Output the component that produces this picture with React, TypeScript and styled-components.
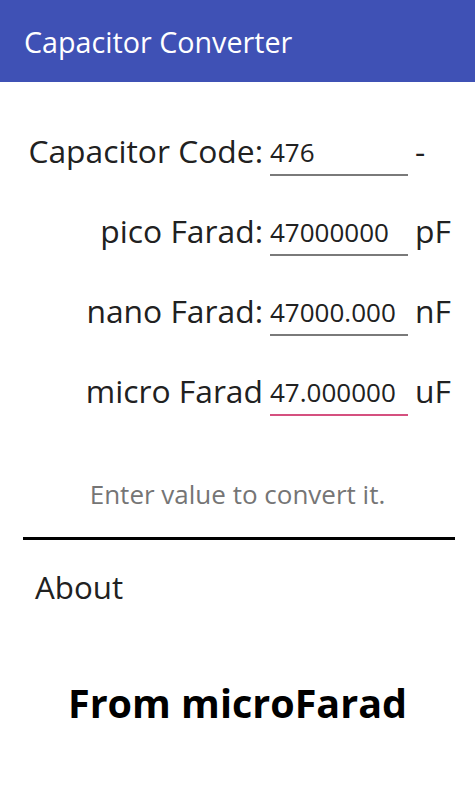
import styled, { createGlobalStyle } from "styled-components";
import { Fragment, useState } from "react";

const GlobalStyle = createGlobalStyle`
  html, body {
    margin: 0;
    padding: 0;
    background: #ffffff;
  }
  body {
    font-family: "Open Sans", "DejaVu Sans", sans-serif;
    color: #212121;
  }
`;

const Page = styled.div`
  width: 475px;
  min-height: 796px;
  display: flex;
  flex-direction: column;
  background: #ffffff;
`;

const AppBar = styled.header`
  height: 82px;
  background: #3f51b5;
  display: flex;
  align-items: center;
  padding: 0 0 0 24px;
  box-sizing: border-box;

  h1 {
    margin: 0;
    font-size: 28.7px;
    font-weight: 400;
    color: #ffffff;
  }
`;

const Form = styled.div`
  display: grid;
  grid-template-columns: 263px 138px auto;
  column-gap: 7px;
  row-gap: 32px;
  padding-top: 46px;
`;

const Label = styled.label`
  height: 48px;
  line-height: 46px;
  font-size: 31.8px;
  text-align: right;
  white-space: nowrap;
  color: #212121;
`;

const Field = styled.input<{ $active?: boolean }>`
  width: 138px;
  height: 48px;
  box-sizing: border-box;
  border: none;
  border-bottom: 2px solid ${(p) => (p.$active ? "#d5507f" : "#7a7a7a")};
  background: transparent;
  padding: 2px 0 0 0;
  font-family: "Open Sans", "DejaVu Sans", sans-serif;
  font-size: 26px;
  color: #212121;
  outline: none;
`;

const Unit = styled.span`
  height: 48px;
  line-height: 46px;
  font-size: 31.8px;
  color: #212121;
`;

const Hint = styled.p`
  margin: 63px 0 0;
  text-align: center;
  font-size: 26px;
  line-height: 30px;
  color: #757575;
`;

const Divider = styled.hr`
  margin: 28px 20px 0 23px;
  border: none;
  height: 3px;
  background: #000000;
`;

const About = styled.div`
  margin: 27px 0 0 35px;
  font-size: 31.3px;
  line-height: 40px;
  color: #212121;
`;

const Result = styled.div`
  margin-top: 71px;
  text-align: center;
  font-size: 39.5px;
  font-weight: 700;
  line-height: 50px;
  color: #000000;
`;

type Row = { label: string; value: string; unit: string; active?: boolean };

const rows: Row[] = [
  { label: "Capacitor Code:", value: "476", unit: "-" },
  { label: "pico Farad:", value: "47000000", unit: "pF" },
  { label: "nano Farad:", value: "47000.000", unit: "nF" },
  { label: "micro Farad", value: "47.000000", unit: "uF", active: true },
];

function App() {
  const [values, setValues] = useState<string[]>(rows.map((r) => r.value));

  return (
    <Page>
      <GlobalStyle />
      <AppBar>
        <h1>Capacitor Converter</h1>
      </AppBar>
      <Form>
        {rows.map((row, i) => (
          <Fragment key={row.label}>
            <Label>{row.label}</Label>
            <Field
              $active={row.active}
              value={values[i]}
              onChange={(e) => {
                const next = [...values];
                next[i] = e.target.value;
                setValues(next);
              }}
            />
            <Unit>{row.unit}</Unit>
          </Fragment>
        ))}
      </Form>
      <Hint>Enter value to convert it.</Hint>
      <Divider />
      <About>About</About>
      <Result>From microFarad</Result>
    </Page>
  );
}

export default App;
